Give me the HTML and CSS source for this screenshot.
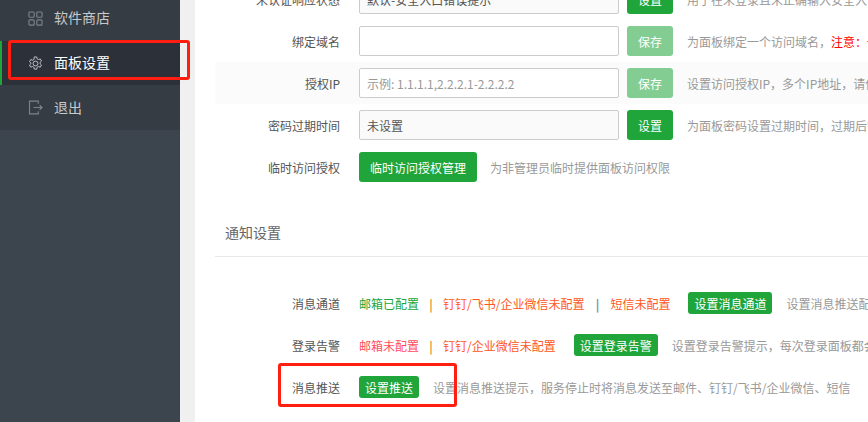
FILE: index.html
```html
<!DOCTYPE html>
<html lang="zh-CN">
<head>
<meta charset="utf-8">
<title>面板设置</title>
<link rel="stylesheet" href="styles.css">
</head>
<body>
<div class="app">
  <aside class="sidebar">
    <nav class="menu">
      <a class="menu-item">
        <svg class="menu-icon" viewBox="0 0 16 16" fill="none" stroke="currentColor" stroke-width="1.2"><rect x="1" y="1" width="5.6" height="5.6" rx="1"/><rect x="9.4" y="1" width="5.6" height="5.6" rx="1"/><rect x="1" y="9.4" width="5.6" height="5.6" rx="1"/><rect x="9.4" y="9.4" width="5.6" height="5.6" rx="1"/></svg>
        <span class="menu-text">软件商店</span>
      </a>
      <a class="menu-item active">
        <svg class="menu-icon" viewBox="0 0 16 16" fill="none" stroke="currentColor" stroke-width="1"><path d="M6.7 1h2.6l.4 2 1.5.8 1.9-.7 1.3 2.3-1.5 1.3v1.6l1.5 1.3-1.3 2.3-1.9-.7-1.5.8-.4 2H6.7l-.4-2-1.5-.8-1.9.7-1.3-2.3 1.5-1.3V7.4L1.6 6.1l1.3-2.3 1.9.7 1.5-.8z"/><circle cx="8" cy="8" r="2.6"/></svg>
        <span class="menu-text">面板设置</span>
      </a>
      <a class="menu-item menu-last">
        <svg class="menu-icon" viewBox="0 0 16 16" fill="none" stroke="currentColor" stroke-width="1.2"><path d="M11 4V1.2H1.6v13.6H11V12"/><path d="M6 8h9M12.4 5.6 15 8l-2.6 2.4"/></svg>
        <span class="menu-text">退出</span>
      </a>
    </nav>
  </aside>
  <main class="main">
    <div class="panel">
      <div class="row">
        <label class="row-label">未认证响应状态</label>
        <input class="field" readonly value="默认-安全入口错误提示">
        <button class="btn btn-fixed">设置</button>
        <p class="hint">用于在未登录且未正确输入安全入口时，响应给用户的提示</p>
      </div>
      <div class="row">
        <label class="row-label">绑定域名</label>
        <input class="field field-white">
        <button class="btn btn-fixed btn-off">保存</button>
        <p class="hint">为面板绑定一个访问域名，<span class="warn">注意：一旦绑定域名，只能通过域名访问面板</span></p>
      </div>
      <div class="row row-band">
        <label class="row-label">授权IP</label>
        <input class="field field-white" placeholder="示例: 1.1.1.1,2.2.2.1-2.2.2.2">
        <button class="btn btn-fixed btn-off">保存</button>
        <p class="hint">设置访问授权IP，多个IP地址，请使用逗号隔开</p>
      </div>
      <div class="row">
        <label class="row-label">密码过期时间</label>
        <input class="field" readonly value="未设置">
        <button class="btn btn-fixed">设置</button>
        <p class="hint">为面板密码设置过期时间，过期后需要重新设置密码</p>
      </div>
      <div class="row">
        <label class="row-label">临时访问授权</label>
        <button class="btn btn-wide">临时访问授权管理</button>
        <p class="hint hint-near">为非管理员临时提供面板访问权限</p>
      </div>
      <h2 class="section-title">通知设置</h2>
      <div class="row">
        <label class="row-label">消息通道</label>
        <span class="status ok">邮箱已配置</span><i class="sep sep-orange">|</i>
        <span class="status bad">钉钉/飞书/企业微信未配置</span><i class="sep sep-blue">|</i>
        <span class="status bad">短信未配置</span>
        <button class="btn btn-small">设置消息通道</button>
        <p class="hint">设置消息推送配置，用于面板通知发送</p>
      </div>
      <div class="row">
        <label class="row-label">登录告警</label>
        <span class="status bad2">邮箱未配置</span><i class="sep sep-orange">|</i>
        <span class="status bad">钉钉/企业微信未配置</span>
        <button class="btn btn-small">设置登录告警</button>
        <p class="hint">设置登录告警提示，每次登录面板都会发送通知</p>
      </div>
      <div class="row">
        <label class="row-label">消息推送</label>
        <button class="btn btn-small btn-push">设置推送</button>
        <p class="hint">设置消息推送提示，服务停止时将消息发送至邮件、钉钉/飞书/企业微信、短信</p>
      </div>
    </div>
  </main>
  <div class="mark mark-menu"></div>
  <div class="mark mark-push"></div>
</div>
</body>
</html>
```
FILE: styles.css
```css
* { box-sizing: border-box; }
html, body { margin: 0; height: 100%; overflow: hidden; }
body {
  font-family: "Noto Sans CJK SC", "Liberation Sans", sans-serif;
  font-size: 12px;
  color: #555;
}
.app { position: relative; display: flex; width: 868px; height: 422px; overflow: hidden; background: #f0f0f0; }

.sidebar { flex: 0 0 180px; background: #3c444d; }
.menu { margin-top: -4px; background: #353c44; }
.menu-item {
  display: flex; align-items: center; height: 45px; padding-left: 28px;
  font-size: 14px; color: #c8c9cb; gap: 11px;
}
.menu-text { line-height: 20px; padding-bottom: 3px; }
.menu-item.active { background: #2c3039; color: #fff; border-left: 2px solid #20a53a; padding-left: 26px; height: 44px; }
.menu-item.active .menu-text { padding-bottom: 2px; }
.menu-item.menu-last .menu-text { padding-bottom: 1px; }
.menu-icon { width: 15px; height: 15px; color: #7f8388; flex: none; }
.active .menu-icon { color: #c4c5c8; }

.main { flex: 1; margin-left: 15px; background: #fff; overflow: hidden; min-width: 0; }
.panel { margin-top: -22px; padding-left: 20px; width: 900px; }

.row { display: flex; align-items: center; height: 42px; white-space: nowrap; }
.row-band { background: #fbfbfb; }
.row-label { flex: none; width: 125px; text-align: right; margin-right: 19px; color: #555; }

.field {
  flex: none; width: 260px; height: 30px; padding: 0 7px;
  border: 1px solid #ccc; border-radius: 2px; background: #fafafa;
  font: inherit; color: #555; outline: 0;
}
.field-white { background: #fff; }
.field::placeholder { color: #999; opacity: 1; }

.btn {
  flex: none; border: 0; border-radius: 3px; background: #20a53a; color: #fff;
  font: inherit; padding: 0; text-align: center;
}
.btn-fixed { width: 46px; height: 30px; margin-left: 8px; }
.btn-off { background: #84cd92; }
.btn-wide { width: 118px; height: 30px; }
.btn-small { width: 84px; height: 22px; margin-left: 18px; }
.btn-push { width: 60px; margin-left: 0; }

.hint { margin: 0 0 0 14px; color: #999; }
.hint-near { margin-left: 13px; }
.warn { color: #f00; }

.section-title {
  margin: 35px 0 25px; padding: 0 0 15px 10px; height: 34px; line-height: 18px;
  border-bottom: 1px solid #e8e8e8;
  font-size: 14px; font-weight: 400; color: #666; width: 653px;
}

.status { flex: none; }
.ok { color: #20a53a; }
.bad { color: #ff5722; }
.bad2 { color: #ff4d5e; }
.sep { flex: none; font-style: normal; font-weight: 700; width: 24px; text-align: center; }
.sep-orange { color: #e8923a; }
.sep-blue { color: #5f8fa8; width: 26px; }

.mark { position: absolute; border: 3px solid #ff1e10; border-radius: 3px; pointer-events: none; }
.mark-menu { left: 8px; top: 40px; width: 182px; height: 40px; }
.mark-push { left: 278px; top: 363px; width: 179px; height: 44px; }
```
